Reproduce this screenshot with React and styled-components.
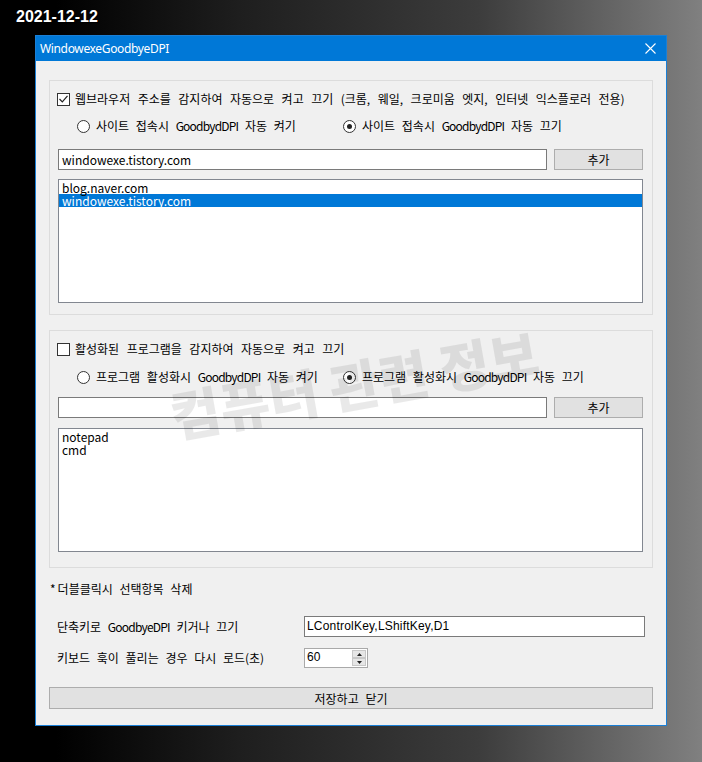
import React from "react";
import styled, { createGlobalStyle } from "styled-components";

const Global = createGlobalStyle`
  html, body { margin: 0; padding: 0; }
  body {
    width: 702px;
    height: 762px;
    overflow: hidden;
    background: linear-gradient(to right, #000 0%, #000 8%, #1e1e1e 34%, #3c3c3c 68%, #808080 100%);
    font-family: "Noto Sans CJK KR", "Noto Sans", sans-serif;
  }
  * { box-sizing: border-box; }
`;

const KR = `"Noto Sans CJK KR", "Noto Sans", sans-serif`;

const Page = styled.div`
  width: 702px;
  height: 762px;
`;

const DateLabel = styled.div`
  padding: 7px 0 0 16px;
  height: 35px;
  font-family: "Liberation Sans", Arial, sans-serif;
  font-weight: bold;
  font-size: 16px;
  line-height: 20px;
  color: #fff;
  text-shadow: 1px 1px 1px #000;
`;

const Window = styled.div`
  position: relative;
  width: 632px;
  height: 691px;
  margin-left: 35px;
  border: 1px solid #1a7fd6;
  background: #f0f0f0;
  display: flex;
  flex-direction: column;
  overflow: hidden;
`;

const TitleBar = styled.div`
  height: 25px;
  flex: none;
  background: #0078d7;
  display: flex;
  align-items: center;
  justify-content: space-between;
  padding-left: 4px;
  color: #fff;
  font-family: "Noto Sans", "Open Sans", sans-serif;
  font-size: 12px;
  letter-spacing: -0.35px;
`;

const CloseBox = styled.div`
  padding: 0 10px 0 0;
  display: flex;
  align-items: center;
`;

const Client = styled.div`
  flex: 1;
  padding: 19px 13px 17px 13px;
  display: flex;
  flex-direction: column;
  font-family: ${KR};
  font-size: 12px;
  word-spacing: 4px;
  color: #000;
`;

const Latin = styled.span`
  letter-spacing: -0.8px;
`;

const GroupBox = styled.div`
  border: 1px solid #dcdcdc;
  padding: 11px 9px ${(p) => p.$pb || 11}px 7px;
  display: flex;
  flex-direction: column;
  & + & { margin-top: 15px; }
`;

const CheckRow = styled.label`
  height: 14px;
  display: flex;
  align-items: center;
  gap: 5px;
  line-height: 14px;
  word-spacing: 4.8px;
  white-space: nowrap;
`;

const CheckBox = styled.span`
  width: 13px;
  height: 13px;
  flex: none;
  border: 1px solid #333;
  background: #fff;
  display: flex;
  align-items: center;
  justify-content: center;
`;

const RadioRow = styled.div`
  margin-top: ${(p) => p.$mt}px;
  height: 14px;
  padding-left: 20px;
  display: flex;
  align-items: center;
  white-space: nowrap;
`;

const RadioItem = styled.label`
  width: ${(p) => (p.$w ? `${p.$w}px` : "auto")};
  display: flex;
  align-items: center;
  gap: 6px;
  line-height: 14px;
`;

const RadioCircle = styled.span`
  width: 13px;
  height: 13px;
  flex: none;
  border-radius: 50%;
  border: 1px solid #333;
  background: #fff;
  display: flex;
  align-items: center;
  justify-content: center;
  &::after {
    content: "";
    width: 5px;
    height: 5px;
    border-radius: 50%;
    background: ${(p) => (p.$on ? "#222" : "transparent")};
  }
`;

const FieldRow = styled.div`
  margin-top: ${(p) => p.$mt}px;
  margin-left: 1px;
  height: 21px;
  display: flex;
  gap: 7px;
`;

const TextBox = styled.div`
  flex: 1;
  height: 21px;
  border: 1px solid #7a7a7a;
  background: #fff;
  padding: 0 3px;
  line-height: 19px;
  font-family: ${KR};
  font-size: 12px;
  word-spacing: 0;
  white-space: nowrap;
  overflow: hidden;
`;

const Button = styled.div`
  width: ${(p) => (p.$w ? `${p.$w}px` : "auto")};
  height: 21px;
  background: #e1e1e1;
  border: 1px solid #adadad;
  display: flex;
  align-items: center;
  justify-content: center;
  font-family: ${KR};
  font-size: 12px;
  line-height: 19px;
`;

const ListBox = styled.div`
  margin-top: ${(p) => p.$mt}px;
  margin-left: 1px;
  height: 124px;
  border: 1px solid #828790;
  background: #fff;
  padding: 1px 0 0 0;
`;

const ListItem = styled.div`
  height: 13px;
  line-height: 13px;
  padding-left: 3px;
  font-family: ${KR};
  font-size: 12px;
  word-spacing: 0;
  background: ${(p) => (p.$sel ? "#0078d7" : "transparent")};
  color: ${(p) => (p.$sel ? "#fff" : "#000")};
  white-space: nowrap;
`;

const Note = styled.div`
  margin-top: 14px;
  height: 14px;
  line-height: 14px;
  padding-left: 1px;
  display: flex;
  align-items: center;
  gap: 2px;
`;

const SettingRow = styled.div`
  margin-top: ${(p) => p.$mt}px;
  height: ${(p) => p.$h}px;
  display: flex;
  align-items: center;
  padding-left: 8px;
`;

const SettingLabel = styled.div`
  width: 247px;
  flex: none;
  line-height: 14px;
  white-space: nowrap;
`;

const KeyBox = styled.div`
  width: 341px;
  height: 21px;
  border: 1px solid #7a7a7a;
  background: #fff;
  padding: 0 2px;
  font-family: "Liberation Sans", Arial, sans-serif;
  font-size: 12px;
  line-height: 19px;
  letter-spacing: 0.2px;
  word-spacing: 0;
  white-space: nowrap;
`;

const NumBox = styled.div`
  width: 64px;
  height: 20px;
  border: 1px solid #a9a9a9;
  background: #fff;
  display: flex;
  justify-content: space-between;
  padding: 1px;
  font-family: "Liberation Sans", Arial, sans-serif;
  font-size: 12px;
  line-height: 14px;
`;

const NumText = styled.span`
  padding-left: 1px;
`;

const Spinner = styled.div`
  width: 14px;
  display: flex;
  flex-direction: column;
`;

const SpinBtn = styled.div`
  flex: 1;
  background: #e6e6e6;
  border: 1px solid #c8c8c8;
  display: flex;
  align-items: center;
  justify-content: center;
`;

const SaveButton = styled(Button)`
  margin-top: 19px;
  width: 100%;
  height: 22px;
`;

const Watermark = styled.div`
  position: absolute;
  left: 132px;
  top: 317px;
  transform: rotate(-10deg);
  transform-origin: center;
  font-family: ${KR};
  font-weight: 900;
  font-size: 54px;
  line-height: 60px;
  color: rgba(0, 0, 0, 0.085);
  white-space: nowrap;
  pointer-events: none;
`;

const Check = () => (
  <svg width="9" height="8" viewBox="0 0 9 8">
    <path d="M0.5 4 L3.3 6.8 L8.5 0.8" fill="none" stroke="#222" strokeWidth="1.2" />
  </svg>
);

const Arrow = ({ up }) => (
  <svg width="5" height="3" viewBox="0 0 5 3">
    <path d={up ? "M0 3 L2.5 0 L5 3 Z" : "M0 0 L2.5 3 L5 0 Z"} fill="#222" />
  </svg>
);

const Section = ({ checked, label, prefix, suffix1, suffix2, inputValue, items, selected, pb, radioMt, fieldMt, listMt }) => (
  <GroupBox $pb={pb}>
    <CheckRow>
      <CheckBox>{checked && <Check />}</CheckBox>
      {label}
    </CheckRow>
    <RadioRow $mt={radioMt}>
      <RadioItem $w={266}>
        <RadioCircle />
        <span>
          {prefix} <Latin>GoodbydDPI</Latin> {suffix1}
        </span>
      </RadioItem>
      <RadioItem>
        <RadioCircle $on />
        <span>
          {prefix} <Latin>GoodbydDPI</Latin> {suffix2}
        </span>
      </RadioItem>
    </RadioRow>
    <FieldRow $mt={fieldMt}>
      <TextBox>{inputValue}</TextBox>
      <Button $w={89}>추가</Button>
    </FieldRow>
    <ListBox $mt={listMt}>
      {items.map((it, i) => (
        <ListItem key={it} $sel={i === selected}>
          {it}
        </ListItem>
      ))}
    </ListBox>
  </GroupBox>
);

export default function App() {
  return (
    <Page>
      <Global />
      <DateLabel>2021-12-12</DateLabel>
      <Window>
        <TitleBar>
          <span>WindowexeGoodbyeDPI</span>
          <CloseBox>
            <svg width="11" height="11" viewBox="0 0 11 11">
              <path d="M0.5 0.5 L10.5 10.5 M10.5 0.5 L0.5 10.5" stroke="#fff" strokeWidth="1.1" />
            </svg>
          </CloseBox>
        </TitleBar>
        <Client>
          <Section
            checked
            label="웹브라우저 주소를 감지하여 자동으로 켜고 끄기 (크롬, 웨일, 크로미움 엣지, 인터넷 익스플로러 전용)"
            prefix="사이트 접속시"
            suffix1="자동 켜기"
            suffix2="자동 끄기"
            inputValue="windowexe.tistory.com"
            items={["blog.naver.com", "windowexe.tistory.com"]}
            selected={1}
            radioMt={13}
            fieldMt={16}
            listMt={9}
          />
          <Section
            label="활성화된 프로그램을 감지하여 자동으로 켜고 끄기"
            prefix="프로그램 활성화시"
            suffix1="자동 켜기"
            suffix2="자동 끄기"
            inputValue=""
            items={["notepad", "cmd"]}
            selected={-1}
            radioMt={14}
            fieldMt={13}
            listMt={10}
            pb={15}
          />
          <Note>
            <span>*</span>
            <span>더블클릭시 선택항목 삭제</span>
          </Note>
          <SettingRow $mt={20} $h={21}>
            <SettingLabel>
              단축키로 <Latin>GoodbyeDPI</Latin> 키거나 끄기
            </SettingLabel>
            <KeyBox>LControlKey,LShiftKey,D1</KeyBox>
          </SettingRow>
          <SettingRow $mt={11} $h={20}>
            <SettingLabel>키보드 훅이 풀리는 경우 다시 로드(초)</SettingLabel>
            <NumBox>
              <NumText>60</NumText>
              <Spinner>
                <SpinBtn><Arrow up /></SpinBtn>
                <SpinBtn><Arrow /></SpinBtn>
              </Spinner>
            </NumBox>
          </SettingRow>
          <SaveButton>저장하고 닫기</SaveButton>
        </Client>
        <Watermark>컴퓨터 관련 정보</Watermark>
      </Window>
    </Page>
  );
}
